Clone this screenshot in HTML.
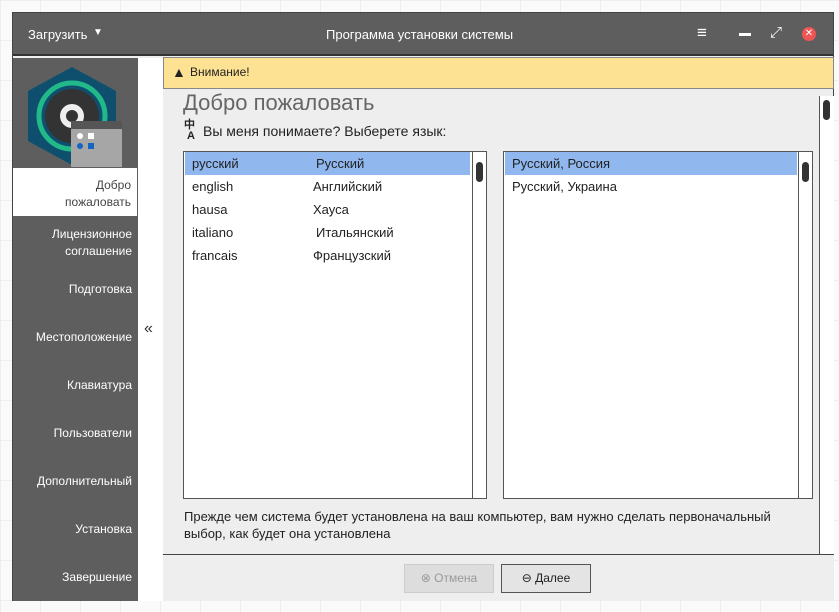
<!DOCTYPE html>
<html><head><meta charset="utf-8"><style>
*{box-sizing:border-box;margin:0;padding:0}
body{width:839px;height:612px;background:#fafafa;font-family:"Liberation Sans","DejaVu Sans",sans-serif;position:relative;overflow:hidden;color:#222}
.a{position:absolute}
.grid{background-image:linear-gradient(#eee 1px,transparent 1px),linear-gradient(90deg,#eee 1px,transparent 1px);background-size:40px 40px;inset:0}
.win{left:12px;top:12px;width:822px;height:589px;border:1px solid #444;background:#eee}
.title{left:0;top:0;width:820px;height:43px;background:#5e5e5e;border-bottom:2px solid #333;color:#fff;font-size:13px}
.side{left:0;top:45px;width:125px;height:543px;background:#5e5e5e;color:#fff;font-size:12px}
.side div{position:absolute;right:6px;text-align:right;line-height:17px}
.lb{border:1px solid #555;background:#fff}
.row{position:absolute;left:1px;width:285px;height:23px;font-size:13px;line-height:23px}
.sb{position:absolute;right:0;top:0;width:14px;height:100%;border-left:1px solid #555;background:#fff}
</style></head><body>
<div class="a grid"></div>
<div class="a win">
 <div class="a title">
  <span class="a" style="left:15px;top:14px">Загрузить</span>
  <span class="a" style="left:80px;top:14px;font-size:10px">▼</span>
  <span class="a" style="left:313px;top:14px">Программа установки системы</span>
  <span class="a" style="left:684px;top:10px;font-size:17px">≡</span>
  <span class="a" style="left:726px;top:20px;width:12px;height:3px;background:#fff"></span>
  <span class="a" style="left:757px;top:11px;font-size:15px">⤢</span>
  <span class="a" style="left:789px;top:14px;width:14px;height:14px;border-radius:50%;background:#e55;color:#fff;font-size:10px;text-align:center;line-height:14px">✕</span>
 </div>
 <div class="a side">
  <svg class="a" style="left:15px;top:7px" width="96" height="103" viewBox="0 0 96 103">
   <polygon points="44,2 88,26 88,76 44,100 0,76 0,26" fill="#0e4f6e"/>
   <circle cx="44" cy="51" r="33" fill="none" stroke="#22b98a" stroke-width="5"/>
   <circle cx="44" cy="51" r="27" fill="#333"/>
   <circle cx="44" cy="51" r="12" fill="#eee"/><circle cx="44" cy="51" r="6" fill="#333"/>
   <rect x="43" y="56" width="51" height="46" fill="#a6a6a6"/><rect x="43" y="56" width="51" height="8" fill="#555"/>
   <circle cx="52" cy="71" r="3" fill="#fff"/><rect x="60" y="68" width="6" height="6" fill="#fff"/>
   <circle cx="52" cy="81" r="3" fill="#1565c0"/><rect x="60" y="78" width="6" height="6" fill="#1565c0"/>
  </svg>
 </div>
 <div class="a" style="left:0;top:155px;width:124px;height:48px;background:#fff;color:#444;font-size:12px;text-align:right;padding:9px 6px 0 0;line-height:17px">Добро<br>пожаловать</div>
 <div class="a side" style="top:203px;height:385px;background:transparent">
  <div style="top:10px">Лицензионное<br>соглашение</div>
  <div style="top:65px">Подготовка</div>
  <div style="top:113px">Местоположение</div>
  <div style="top:161px">Клавиатура</div>
  <div style="top:209px">Пользователи</div>
  <div style="top:257px">Дополнительный</div>
  <div style="top:305px">Установка</div>
  <div style="top:353px">Завершение</div>
 </div>
 <div class="a" style="left:125px;top:45px;width:25px;height:543px;background:#fff;color:#333;font-size:16px"><span class="a" style="left:6px;top:262px">«</span></div>
 <div class="a" style="left:150px;top:44px;width:671px;height:32px;background:#fde293;border:1px solid #888;font-size:12px;line-height:29px;padding-left:26px">Внимание!
  <span class="a" style="left:8px;top:0;font-size:14px">▲</span></div>
 <div class="a" style="left:170px;top:77px;font-size:22px;color:#666">Добро пожаловать</div>
 <div class="a" style="left:171px;top:107px;font-size:11px;line-height:11px;font-weight:bold">中<br>&nbsp;A</div>
 <div class="a" style="left:190px;top:110px;font-size:14px">Вы меня понимаете? Выберете язык:</div>
 <div class="a" style="left:806px;top:83px;width:15px;height:458px;border-left:1px solid #555;background:#fff"><div class="a" style="left:3px;top:4px;width:7px;height:20px;border-radius:4px;background:#333"></div></div>
 <div class="a lb" style="left:170px;top:138px;width:304px;height:348px">
  <div class="row" style="top:0;background:#90b8ee"><span class="a" style="left:7px">русский</span><span class="a" style="left:131px">Русский</span></div>
  <div class="row" style="top:23px"><span class="a" style="left:7px">english</span><span class="a" style="left:128px">Английский</span></div>
  <div class="row" style="top:46px"><span class="a" style="left:7px">hausa</span><span class="a" style="left:128px">Хауса</span></div>
  <div class="row" style="top:69px"><span class="a" style="left:7px">italiano</span><span class="a" style="left:131px">Итальянский</span></div>
  <div class="row" style="top:92px"><span class="a" style="left:7px">francais</span><span class="a" style="left:128px">Французский</span></div>
  <div class="sb"><div class="a" style="left:3px;top:10px;width:7px;height:20px;border-radius:4px;background:#333"></div></div>
 </div>
 <div class="a lb" style="left:490px;top:138px;width:310px;height:348px">
  <div class="row" style="top:0;width:292px;background:#90b8ee"><span class="a" style="left:7px">Русский, Россия</span></div>
  <div class="row" style="top:23px"><span class="a" style="left:7px">Русский, Украина</span></div>
  <div class="sb"><div class="a" style="left:3px;top:10px;width:7px;height:20px;border-radius:4px;background:#333"></div></div>
 </div>
 <div class="a" style="left:171px;top:495px;width:630px;font-size:13px;line-height:17px">Прежде чем система будет установлена на ваш компьютер, вам нужно сделать первоначальный выбор, как будет она установлена</div>
 <div class="a" style="left:150px;top:541px;width:671px;height:47px;border-top:1px solid #444;background:#eee">
  <div class="a" style="left:241px;top:9px;width:90px;height:29px;border:1px solid #ccc;background:#ddd;color:#999;font-size:12px;text-align:center;line-height:27px">⊗ Отмена</div>
  <div class="a" style="left:338px;top:9px;width:90px;height:29px;border:1px solid #555;background:#e4e4e4;font-size:12px;text-align:center;line-height:27px">⊖ Далее</div>
 </div>
</div>
</body></html>
